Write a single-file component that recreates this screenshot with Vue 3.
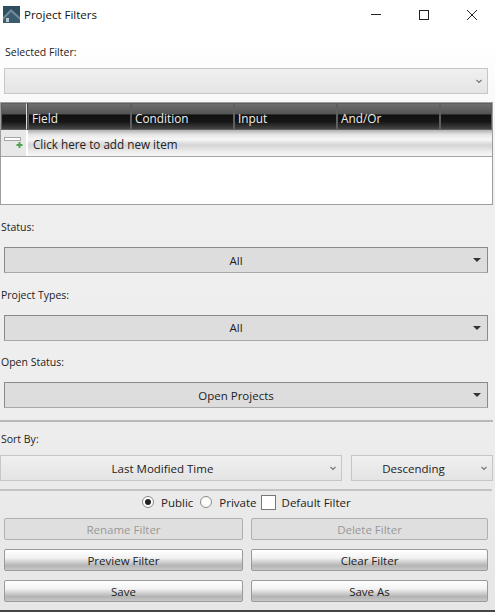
<template>
  <div class="window">
    <header class="titlebar">
      <svg class="logo" width="17" height="17" viewBox="0 0 17 17">
        <rect width="17" height="17" fill="#2f4f5e" />
        <path d="M0 11 L8 3 L17 11 V17 H0 Z" fill="#71899a" />
        <path d="M0 14 L8 6 L17 14 V17 H0 Z" fill="#3a5c6c" />
        <rect x="3" y="12" width="3" height="4" fill="#b9c9d0" />
      </svg>
      <span class="title">Project Filters</span>
      <div class="window-controls">
        <svg width="12" height="12" viewBox="0 0 12 12"><line x1="1" y1="5.5" x2="11" y2="5.5" stroke="#222" /></svg>
        <svg width="12" height="12" viewBox="0 0 12 12"><rect x="1.5" y="1.5" width="9" height="9" fill="none" stroke="#222" /></svg>
        <svg width="12" height="12" viewBox="0 0 12 12"><path d="M1 1 L11 11 M11 1 L1 11" stroke="#222" fill="none" /></svg>
      </div>
    </header>

    <div class="selected">
      <label class="label">Selected Filter:</label>
      <div class="combo light selected-combo">
        <svg class="chev" width="8" height="5" viewBox="0 0 8 5"><path d="M1.5 1 L4 3.5 L6.5 1" fill="none" stroke="#777" stroke-width="1.2" /></svg>
      </div>
    </div>

    <div class="grid">
      <div class="grid-head">
        <div class="head-cell marker" />
        <div v-for="col in columns" :key="col" class="head-cell col">{{ col }}</div>
        <div class="head-cell last" />
      </div>
      <div class="grid-row">
        <div class="add-icon">
          <svg width="20" height="14" viewBox="0 0 20 14">
            <rect x="0.5" y="1.5" width="16" height="3" fill="#fff" stroke="#a5a5a5" />
            <path d="M15.5 6 V12 M12.5 9 H18.5" stroke="#4ea24e" stroke-width="2" />
          </svg>
        </div>
        <div class="add-text">Click here to add new item</div>
      </div>
    </div>

    <div class="filters">
      <div v-for="f in filters" :key="f.label" class="filter">
        <label class="label">{{ f.label }}</label>
        <div class="combo dark">
          {{ f.value }}
          <span class="arrow" />
        </div>
      </div>
    </div>

    <hr class="divider first" />

    <div class="sort">
      <label class="label">Sort By:</label>
      <div class="sort-row">
        <div class="combo light sort-field">
          Last Modified Time
          <svg class="chev" width="8" height="5" viewBox="0 0 8 5"><path d="M1.5 1 L4 3.5 L6.5 1" fill="none" stroke="#777" stroke-width="1.2" /></svg>
        </div>
        <div class="combo light sort-dir">
          Descending
          <svg class="chev" width="8" height="5" viewBox="0 0 8 5"><path d="M1.5 1 L4 3.5 L6.5 1" fill="none" stroke="#777" stroke-width="1.2" /></svg>
        </div>
      </div>
    </div>

    <hr class="divider second" />

    <div class="options">
      <span class="radio on" />
      <span>Public</span>
      <span class="radio" />
      <span>Private</span>
      <span class="check" />
      <span>Default Filter</span>
    </div>

    <div class="actions">
      <button class="btn" disabled>Rename Filter</button>
      <button class="btn" disabled>Delete Filter</button>
      <button class="btn">Preview Filter</button>
      <button class="btn">Clear Filter</button>
      <button class="btn">Save</button>
      <button class="btn">Save As</button>
    </div>
  </div>
</template>

<script setup>
const columns = ['Field', 'Condition', 'Input', 'And/Or']

const filters = [
  { label: 'Status:', value: 'All' },
  { label: 'Project Types:', value: 'All' },
  { label: 'Open Status:', value: 'Open Projects' }
]
</script>

<style>
html,
body {
  margin: 0;
  overflow: hidden;
}
</style>

<style scoped>
.window {
  box-sizing: border-box;
  width: 495px;
  height: 612px;
  overflow: hidden;
  font-family: "Open Sans", "Noto Sans", sans-serif;
  font-size: 11.5px;
  color: #222;
  background: linear-gradient(#fff 0, #fff 40px, #efefef 200px, #eeeeee 400px, #e6e6e6 610px);
  border-bottom: 2px solid #444;
}

.titlebar {
  display: flex;
  align-items: flex-start;
  height: 30px;
  padding-left: 3px;
}

.logo {
  flex-shrink: 0;
  margin-top: 6px;
}

.title {
  margin-left: 4px;
  margin-top: 7px;
  font-size: 11.5px;
  color: #111;
}

.window-controls {
  display: flex;
  gap: 36px;
  margin-top: 9px;
  margin-left: auto;
  margin-right: 17px;
}

.label {
  display: block;
  height: 16px;
  line-height: 16px;
  font-size: 10.5px;
  color: #222;
}

.selected {
  padding: 14px 0 0 5px;
}

.selected .label {
  margin-bottom: 8px;
}

.combo {
  position: relative;
  box-sizing: border-box;
  display: flex;
  align-items: center;
  justify-content: center;
  font-size: 11.5px;
}

.combo.light {
  height: 26px;
  border: 1px solid #c6c6c6;
  background: linear-gradient(#f0f0f0, #e4e4e4);
}

.combo.dark {
  width: 484px;
  height: 26px;
  margin-left: 4px;
  padding-right: 20px;
  border: 1px solid #8a8a8a;
  border-bottom-color: #a8a8a8;
  background: #dddddd;
}

.selected-combo {
  width: 484px;
  margin-left: -1px;
}

.chev {
  position: absolute;
  right: 4px;
  top: 10px;
}

.arrow {
  position: absolute;
  right: 6px;
  top: 10px;
  border-left: 4px solid transparent;
  border-right: 4px solid transparent;
  border-top: 4px solid #333;
}

.grid {
  box-sizing: border-box;
  width: 493px;
  height: 103px;
  margin-top: 8px;
  border: 1px solid #9d9d9d;
  background: #fff;
}

.grid-head {
  display: flex;
  height: 27px;
  background: #444;
}

.head-cell {
  box-sizing: border-box;
  height: 27px;
  border: 1px solid #5f5f5f;
  background: linear-gradient(#6e6e6e 0, #555 38%, #111 45%, #151515 70%, #444 100%);
  color: #eee;
  line-height: 29px;
  font-size: 11.8px;
}

.head-cell.marker {
  width: 26px;
  margin-right: 1px;
  border-right: 1px solid #ddd;
}

.head-cell.col {
  width: 103px;
  padding-left: 3px;
}

.head-cell.last {
  flex: 1;
}

.grid-row {
  display: flex;
  height: 26px;
  border-bottom: 1px solid #a6a6a6;
}

.add-icon {
  box-sizing: border-box;
  display: flex;
  align-items: center;
  justify-content: center;
  width: 26px;
  background: #e8e8e8;
  border-right: 1px solid #fff;
}

.add-text {
  flex: 1;
  margin-left: 1px;
  padding-left: 5px;
  line-height: 28px;
  font-size: 11.7px;
  color: #222;
  background: linear-gradient(#b0b0b0 0, #e6e6e6 18%, #f6f6f6 36%, #d4d4d4 58%, #eee 85%, #f6f6f6 100%);
}

.filters {
  display: flex;
  flex-direction: column;
  gap: 13.5px;
  padding-top: 14px;
}

.filter .label {
  margin-bottom: 12px;
  padding-left: 1px;
}

.divider {
  height: 0;
  margin: 0;
  border: 0;
  border-top: 2px solid #b8b8b8;
}

.divider.first {
  width: 493px;
  margin-top: 12px;
}

.divider.second {
  width: 492px;
  margin-top: 8px;
  border-top-color: #c4c4c4;
}

.sort {
  padding-top: 9px;
}

.sort .label {
  padding-left: 1px;
  margin-bottom: 8px;
}

.sort-row {
  display: flex;
  gap: 9px;
  width: 493px;
}

.sort-field {
  width: 342px;
  padding-right: 17px;
}

.sort-dir {
  flex: 1;
  padding-right: 17px;
}

.options {
  display: flex;
  align-items: center;
  height: 22px;
  padding-left: 142px;
}

.radio {
  position: relative;
  box-sizing: border-box;
  width: 12px;
  height: 12px;
  margin-right: 7px;
  border: 1px solid #888;
  border-radius: 50%;
  background: #fff;
}

.radio.on::after {
  content: "";
  position: absolute;
  top: 2px;
  left: 2px;
  width: 6px;
  height: 6px;
  border-radius: 50%;
  background: #222;
}

.options span + .radio {
  margin-left: 7px;
}

.check {
  box-sizing: border-box;
  width: 15px;
  height: 15px;
  margin: 0 6px 0 4px;
  border: 1px solid #777;
  background: #fff;
}

.actions {
  display: grid;
  grid-template-columns: 239px 237px;
  column-gap: 8px;
  row-gap: 9px;
  margin-top: 5px;
  padding-left: 4px;
}

.btn {
  box-sizing: border-box;
  height: 22px;
  padding: 0;
  border: 1px solid #9a9a9a;
  border-radius: 2px;
  background: linear-gradient(#fff 0, #f2f2f2 40%, #d8d8d8 55%, #b4b4b4 78%, #c8c8c8 100%);
  font-family: inherit;
  font-size: 11.5px;
  color: #222;
}

.btn:disabled {
  background: #dfdfdf;
  border-color: #b0b0b0;
  color: #999;
}
</style>
